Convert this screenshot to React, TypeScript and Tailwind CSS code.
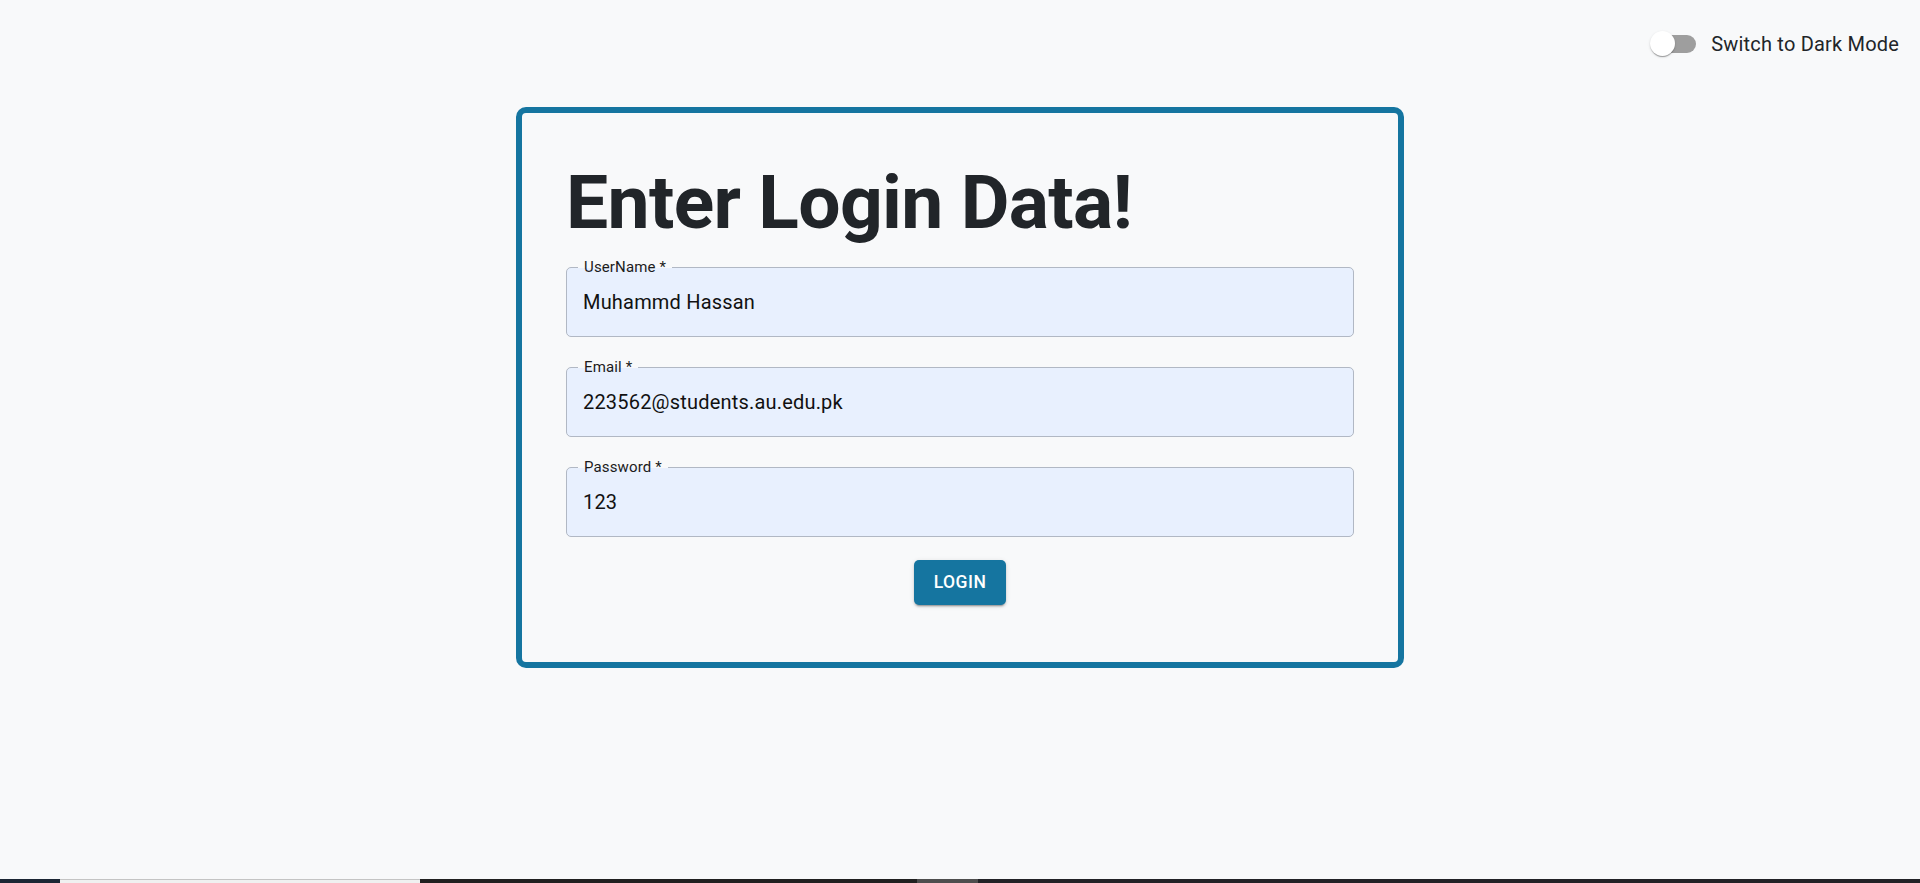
import { useState } from "react";

type Field = {
  label: string;
  value: string;
  type: string;
};

const fields: Field[] = [
  { label: "UserName", value: "Muhammd Hassan", type: "text" },
  { label: "Email", value: "223562@students.au.edu.pk", type: "email" },
  { label: "Password", value: "123", type: "text" },
];

function DarkSwitch() {
  const [on, setOn] = useState(false);
  return (
    <label className="flex items-center cursor-pointer select-none">
      <span className="relative flex items-center w-[72px] h-[47px] px-[15px]" onClick={() => setOn(!on)}>
        <span className="block w-[42px] h-[18px] rounded-full bg-[#9e9e9e]" />
        <span className="absolute left-[11px] top-[11px] w-[25px] h-[25px] rounded-full bg-white shadow-[0_2px_1px_-1px_rgba(0,0,0,0.2),0_1px_1px_0_rgba(0,0,0,0.14),0_1px_3px_0_rgba(0,0,0,0.12)]" />
      </span>
      <span className="text-[20px] tracking-[0.19px] text-[#212529]">Switch to Dark Mode</span>
    </label>
  );
}

function OutlinedField({ field }: { field: Field }) {
  return (
    <div className="relative h-[70px] rounded-[5px] border border-[#b1b8c4] bg-[#e8f0fe]">
      {/* notch label */}
      <span className="absolute -top-[10px] left-[11px] px-[6px] text-[15px] leading-[18px] tracking-[0.15px] text-[#1c1c1c] bg-[linear-gradient(to_bottom,#f8f9fa_55%,#e8f0fe_55%)]">
        {field.label} *
      </span>
      <input
        readOnly
        type={field.type}
        value={field.value}
        className="w-full h-full bg-transparent px-[16px] text-[20px] tracking-[0.19px] text-[#111] outline-none"
      />
    </div>
  );
}

export default function App() {
  return (
    <div className="min-h-[883px] flex flex-col bg-[#f8f9fa] font-['Roboto',sans-serif]">
      {/* top bar */}
      <div className="flex justify-end pt-[20px] pr-[21px]">
        <DarkSwitch />
      </div>

      {/* card */}
      <div className="mx-auto mt-[40px] w-[888px] border-[6px] border-[#1575a0] rounded-[10px] px-[44px] pt-[44px] pb-[57px]">
        <h2 className="text-[75px] leading-[90px] font-bold text-[#212529] tracking-[-0.65px]">Enter Login Data!</h2>
        <div className="flex flex-col gap-[30px] mt-[20px]">
          {fields.map((f) => (
            <OutlinedField key={f.label} field={f} />
          ))}
        </div>
        <div className="flex justify-center mt-[23px]">
          <button className="h-[45px] px-[20px] rounded-[5px] bg-[#1575a0] text-white text-[17.5px] font-medium tracking-[0.5px] shadow-[0_3px_1px_-2px_rgba(0,0,0,0.2),0_2px_2px_0_rgba(0,0,0,0.14),0_1px_5px_0_rgba(0,0,0,0.12)]">
            LOGIN
          </button>
        </div>
      </div>

      <div className="flex-1" />

      {/* taskbar strip */}
      <div className="flex h-[4px]">
        <div className="w-[60px] bg-[#1b2533]" />
        <div className="w-[360px] bg-[#f0f0f0] border-t border-[#c4c4c4]" />
        <div className="w-[497px] bg-[#202020]" />
        <div className="w-[61px] bg-[#4e4e4e]" />
        <div className="flex-1 bg-[#222226]" />
      </div>
    </div>
  );
}
